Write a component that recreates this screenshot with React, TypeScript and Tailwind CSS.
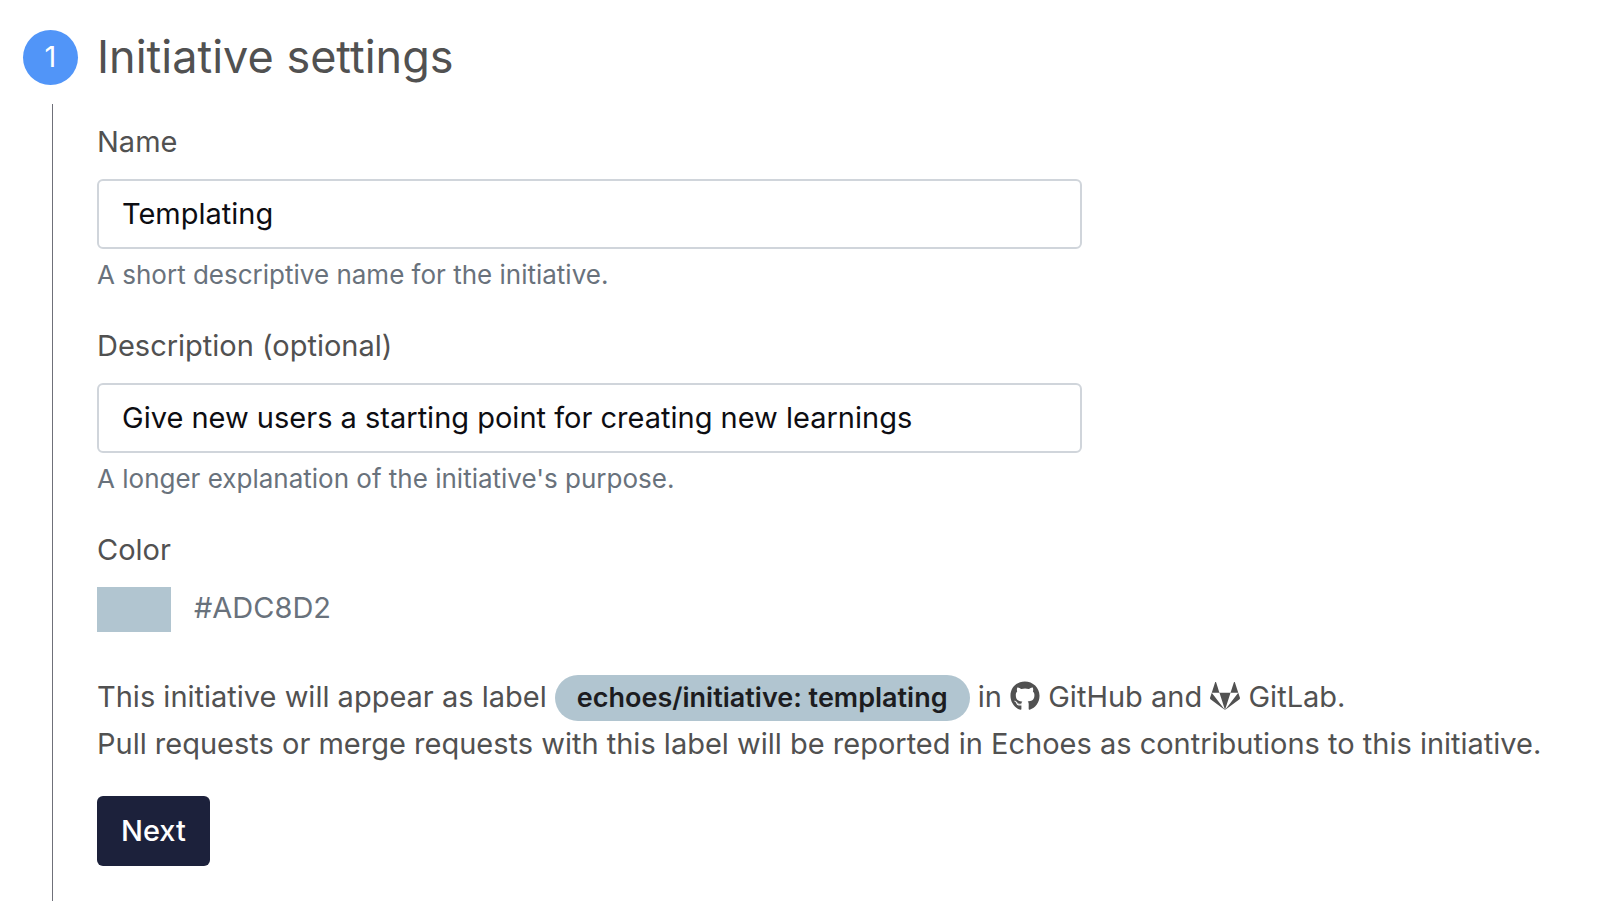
import { useState } from 'react';
import { FaGithub, FaGitlab } from 'react-icons/fa';

const LABEL_COLOR = '#ADC8D2';

type FieldProps = {
  id: string;
  label: string;
  help: string;
  value: string;
  onChange: (value: string) => void;
};

function Field({ id, label, help, value, onChange }: FieldProps) {
  return (
    <div>
      <label htmlFor={id} className="block">{label}</label>
      <input
        id={id}
        type="text"
        value={value}
        onChange={(e) => onChange(e.target.value)}
        aria-describedby={`${id}-help`}
        className="block mt-[14px] h-[70px] w-full max-w-[985px] px-[23px] pb-[2px] rounded-md border-2 border-[#d0d5db] bg-white text-[#0d0d12]"
      />
      <p id={`${id}-help`} className="mt-[6px] text-[26px] leading-[40px] text-[#69727c]">{help}</p>
    </div>
  );
}

export default function App() {
  const [name, setName] = useState('Templating');
  const [description, setDescription] = useState('Give new users a starting point for creating new learnings');

  return (
    <main className="flex flex-col min-h-screen pt-[30px] bg-white font-['Inter',sans-serif] text-[29px] leading-[46px] text-[#515151]">
      <header className="flex items-start gap-[19px] pl-[23px] leading-[54px]">
        <span className="flex justify-center size-[55px] rounded-full bg-[#5195f8] text-white">1</span>
        <h1 className="text-[45px]">Initiative settings</h1>
      </header>

      <div className="flex-1 mt-[19px] ml-[52px] pt-[15px] pb-[35px] pl-[44px] border-l border-[#6f7079]">
        <form onSubmit={(e) => e.preventDefault()}>
          <div className="flex flex-col gap-[28px]">
            <Field
              id="name"
              label="Name"
              help="A short descriptive name for the initiative."
              value={name}
              onChange={setName}
            />
            <Field
              id="description"
              label="Description (optional)"
              help="A longer explanation of the initiative's purpose."
              value={description}
              onChange={setDescription}
            />
            <div>
              <label htmlFor="color" className="block">Color</label>
              <div className="flex items-start gap-[23px] mt-[14px] h-[45px] leading-[42px]">
                <button id="color" type="button" className="h-[45px] w-[74px] bg-[#b1c5d0]" />
                <span className="text-[#69727c]">{LABEL_COLOR}</span>
              </div>
            </div>
          </div>

          <p className="mt-[42px]">
            This initiative will appear as label{' '}
            <span className="inline-block px-[22px] rounded-full bg-[#b1c5d0] text-[27px] font-semibold text-[#1c1c20]">
              echoes/initiative: templating
            </span>{' '}
            in <FaGithub className="inline align-[-4px] text-[30px]" /> GitHub and{' '}
            <FaGitlab className="inline align-[-4px] text-[30px]" /> GitLab.
            <br />
            Pull requests or merge requests with this label will be reported in Echoes as contributions to this initiative.
          </p>

          <button type="submit" className="mt-[29px] h-[70px] px-6 rounded-md bg-[#1c213b] font-medium text-white">
            Next
          </button>
        </form>
      </div>
    </main>
  );
}
